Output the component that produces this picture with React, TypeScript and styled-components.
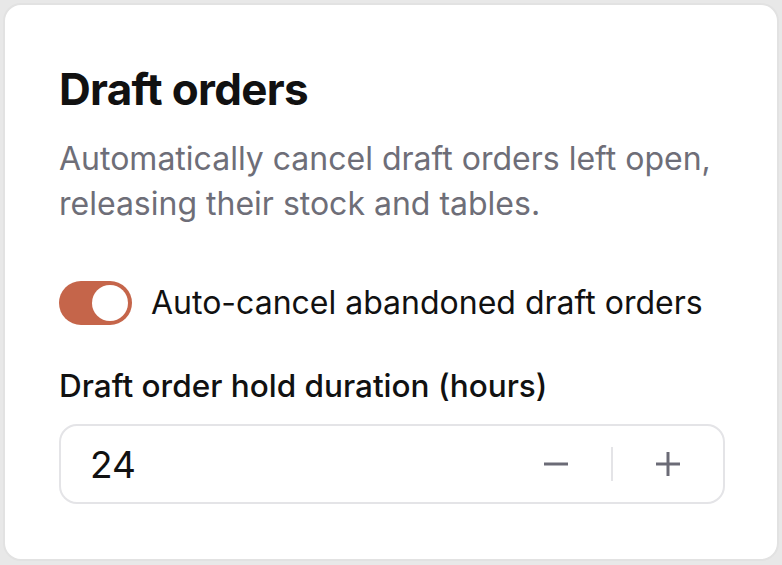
import * as React from "react"
import styled, { createGlobalStyle } from "styled-components"

const GlobalStyle = createGlobalStyle`
  html, body {
    margin: 0;
    padding: 0;
    background: #e8e8e8;
  }
  body {
    padding: 3px;
    font-family: Inter, "Noto Sans", sans-serif;
    -webkit-font-smoothing: antialiased;
  }
  * {
    box-sizing: border-box;
  }
`

const App = () => {
  const [enabled, setEnabled] = React.useState(true)
  const [hours, setHours] = React.useState(24)

  return (
    <>
      <GlobalStyle />
      <Card>
        <Title>Draft orders</Title>
        <Description>
          Automatically cancel draft orders left open, releasing their stock and tables.
        </Description>
        <ToggleRow>
          <Switch
            type="button"
            role="switch"
            aria-checked={enabled}
            $on={enabled}
            onClick={() => setEnabled(!enabled)}
          >
            <Knob $on={enabled} />
          </Switch>
          <ToggleLabel>Auto-cancel abandoned draft orders</ToggleLabel>
        </ToggleRow>
        <Field>
          <FieldLabel htmlFor="hold-hours">Draft order hold duration (hours)</FieldLabel>
          <NumberBox>
            <NumberInput
              id="hold-hours"
              value={hours}
              onChange={(e) => setHours(Number(e.target.value) || 0)}
            />
            <StepButton type="button" aria-label="Decrease" onClick={() => setHours(Math.max(0, hours - 1))}>
              <svg width="26" height="26" viewBox="0 0 26 26">
                <line x1="1" y1="13" x2="25" y2="13" stroke="currentColor" strokeWidth="3" />
              </svg>
            </StepButton>
            <Divider />
            <StepButton type="button" aria-label="Increase" onClick={() => setHours(hours + 1)}>
              <svg width="26" height="26" viewBox="0 0 26 26">
                <line x1="1" y1="13" x2="25" y2="13" stroke="currentColor" strokeWidth="3" />
                <line x1="13" y1="1" x2="13" y2="25" stroke="currentColor" strokeWidth="3" />
              </svg>
            </StepButton>
          </NumberBox>
        </Field>
      </Card>
    </>
  )
}

export default App

const Card = styled.div`
  width: 776px;
  height: 558px;
  background: #ffffff;
  border: 2px solid #e2e2e2;
  border-radius: 18px;
  padding: 58px 54px 0;
`

const Title = styled.h2`
  margin: 0;
  font-size: 44px;
  line-height: 53px;
  font-weight: 700;
  letter-spacing: -0.7px;
  color: #111111;
`

const Description = styled.p`
  margin: 20px 0 0;
  max-width: 670px;
  font-size: 32px;
  line-height: 45px;
  color: #6e6e78;
`

const ToggleRow = styled.div`
  display: flex;
  align-items: center;
  gap: 19px;
  margin-top: 55px;
`

const Switch = styled.button<{ $on: boolean }>`
  position: relative;
  flex: none;
  width: 73px;
  height: 44px;
  padding: 0;
  border: none;
  border-radius: 22px;
  background: ${(p) => (p.$on ? "#c5654a" : "#d4d4d8")};
  cursor: pointer;
`

const Knob = styled.span<{ $on: boolean }>`
  position: absolute;
  top: 4px;
  left: ${(p) => (p.$on ? "33px" : "4px")};
  width: 36px;
  height: 36px;
  border-radius: 50%;
  background: #ffffff;
`

const ToggleLabel = styled.span`
  font-size: 32px;
  line-height: 44px;
  color: #111111;
`

const Field = styled.div`
  display: flex;
  flex-direction: column;
  gap: 18px;
  margin-top: 41px;
`

const FieldLabel = styled.label`
  font-size: 31.5px;
  line-height: 40px;
  font-weight: 500;
  color: #111111;
`

const NumberBox = styled.div`
  display: flex;
  align-items: center;
  width: 666px;
  height: 80px;
  border: 2px solid #e4e4e7;
  border-radius: 18px;
`

const NumberInput = styled.input`
  flex: 1;
  min-width: 0;
  height: 100%;
  padding: 0 0 0 29px;
  border: none;
  outline: none;
  background: transparent;
  font-family: inherit;
  font-size: 37px;
  color: #111111;
`

const StepButton = styled.button`
  display: flex;
  align-items: center;
  justify-content: center;
  width: 110px;
  height: 100%;
  padding: 0;
  border: none;
  background: transparent;
  color: #6b6b76;
  cursor: pointer;
`

const Divider = styled.span`
  width: 2px;
  height: 34px;
  background: #e4e4e7;
`
